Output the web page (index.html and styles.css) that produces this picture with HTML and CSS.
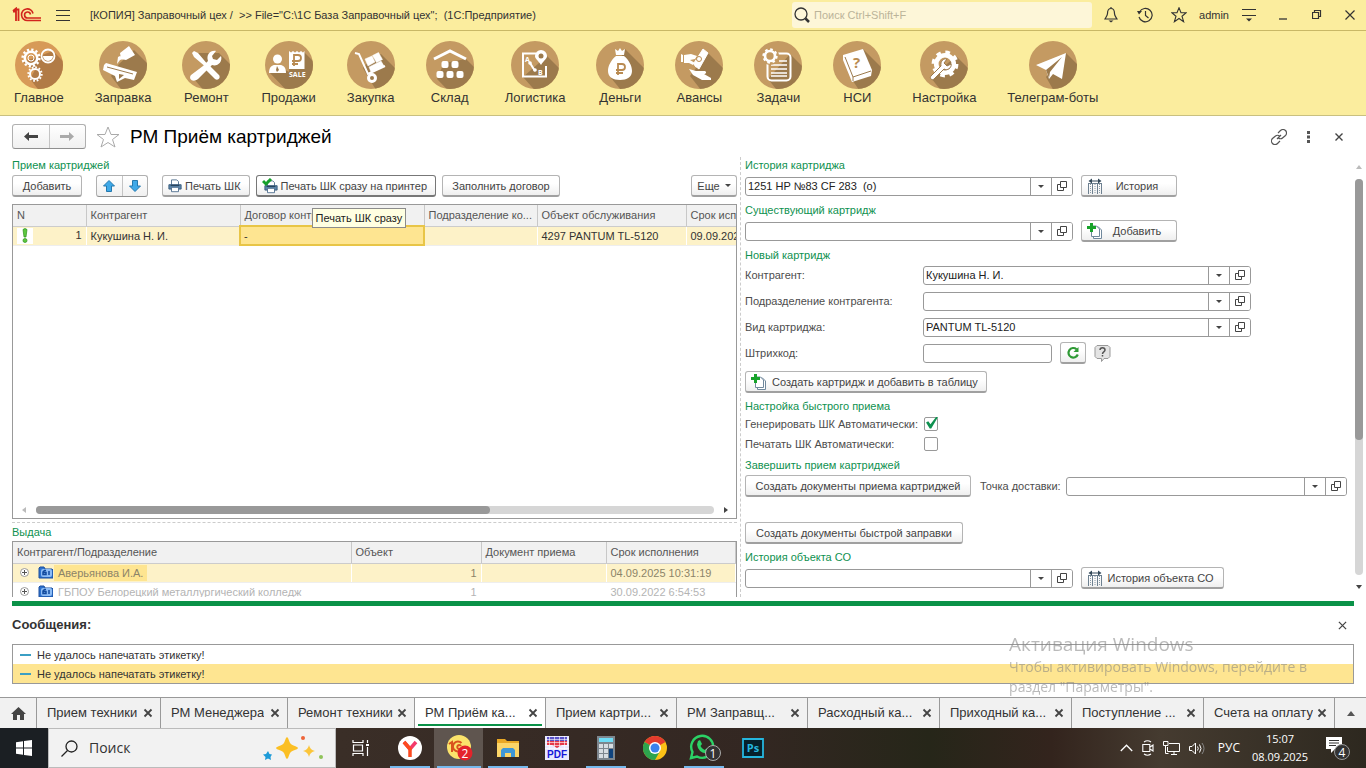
FILE: index.html
```html
<!DOCTYPE html>
<html lang="ru">
<head>
<meta charset="utf-8">
<title>РМ Приём картриджей</title>
<link rel="stylesheet" href="styles.css">
</head>
<body>
<svg class="defs" aria-hidden="true">
  <defs>
    <clipPath id="disc"><circle cx="24" cy="24" r="24"/></clipPath>
    <symbol id="i-open" viewBox="0 0 10 10"><path d="M3.500 .5h6v6h-6zM3 3.500H.5v6h6V7" fill="none" stroke="#444"/></symbol>
    <symbol id="i-x" viewBox="0 0 10 10"><path d="M1.500 1.500l7 7M8.500 1.500l-7 7" fill="none" stroke="#444" stroke-width="1.800"/></symbol>
    <symbol id="i-printer" viewBox="0 0 16 16"><path d="M4 1h6l2 2v4H4z" fill="#fff" stroke="#4a6a8a"/><path d="M1 6.500h14v5H1z" fill="#5d87ad" stroke="#355878"/><path d="M3 7.500h10" stroke="#20384e"/><path d="M4 9.500h8v5H4z" fill="#fff" stroke="#4a6a8a"/></symbol>
    <symbol id="i-addcopy" viewBox="0 0 16 16"><path d="M6.500 4h5l3 3v8.500h-8z" fill="#fff" stroke="#70889c"/><path d="M4.500 3h5l3 3v7.500h-8z" fill="#fff" stroke="#70889c"/><path d="M3 0h3v3h3v3H6v3H3V6H0V3h3z" fill="#18a32b"/></symbol>
    <symbol id="i-history" viewBox="0 0 16 16"><path d="M1.500 5v11M5.500 5v11M10.500 5v11M14.500 5v11M1 5.500h14" stroke="#6d8090"/><path d="M3.500 6v10M12.500 6v10M8 6v10" stroke="#8a9aa6" stroke-dasharray="1 1"/><path d="M1.500 3L5 .5v2h6v-2L14.500 3 11 5.500v-2H5v2z" fill="#33495a"/></symbol>
    <symbol id="i-gear" viewBox="-12 -12 24 24"><circle r="7.500" fill="none" stroke="#fff" stroke-width="4"/><circle r="10" fill="none" stroke="#fff" stroke-width="3" stroke-dasharray="3.927 3.927"/></symbol>
    <symbol id="i-cog" viewBox="-12 -12 24 24"><circle r="7.500" fill="none" stroke="#fff" stroke-width="3"/><circle r="10" fill="none" stroke="#fff" stroke-width="3" stroke-dasharray="2.618 2.618"/></symbol>
    <symbol id="i-plus" viewBox="0 0 9 9"><circle cx="4.500" cy="4.500" r="4" fill="#fff" stroke="#999"/><path d="M2 4.500h5M4.500 2v5" stroke="#555"/></symbol>
    <symbol id="i-folder" viewBox="0 0 15 13"><path d="M1 2l1-1h4l1 2h7l1 1v8H1z" fill="#2d72cf" stroke="#1d4f9e"/><rect x="3" y="3" width="11" height="8" rx="2" fill="#8dbcf5"/><path d="M8 4.500H6.500L5 6v2.500h3V6.500H5.500M11 5v4" stroke="#124a9e" stroke-width="1.500" fill="none"/></symbol>
  </defs>
</svg>

<header class="topbar">
  <svg class="logo" viewBox="0 0 30 16"><path d="M1 4l3-2.500V14M4 2.500h2.500V14M1 4.500h3" fill="none" stroke="#d2251d" stroke-width="1.800"/><path d="M21 6.500A5.800 5.800 0 1 0 15.500 13.500H29M18.500 7.500a3 3 0 1 0-3 3.500H29" fill="none" stroke="#d2251d" stroke-width="1.600"/></svg>
  <button class="plain burger" aria-label="Меню"><svg width="14" height="11" viewBox="0 0 14 11"><path d="M0 .5h14M0 5.500h14M0 10.500h14" stroke="#333"/></svg></button>
  <span class="app-title">[КОПИЯ] Заправочный цех /&nbsp; &gt;&gt; File="C:\1С База Заправочный цех";&nbsp; (1С:Предприятие)</span>
  <label class="search"><svg width="16" height="16" viewBox="0 0 16 16"><circle cx="7" cy="7" r="6" fill="none" stroke="#333" stroke-width="1.300"/><path d="M11.500 11.500l3.500 3.500" stroke="#333" stroke-width="2.500"/></svg><input type="text" placeholder="Поиск Ctrl+Shift+F" aria-label="Поиск"></label>
  <button class="plain cell" aria-label="Уведомления"><svg width="14" height="16" viewBox="0 0 14 16"><path d="M7 1.500c-3 0-3.500 3-3.500 5S2 10 1 12h12c-1-2-2.500-3-2.500-5.500S10 1.500 7 1.500zM7 0v2" fill="none" stroke="#333" stroke-width="1.200"/><path d="M4.500 13.500h5L7 15.500z" fill="#333"/></svg></button>
  <button class="plain cell" aria-label="История"><svg width="16" height="16" viewBox="0 0 16 16"><path d="M2.500 5A6.700 6.700 0 1 1 2 10M8.500 4v4.500l3 2.500" fill="none" stroke="#333" stroke-width="1.200"/><path d="M0 4h5L2 7.500z" fill="#333"/></svg></button>
  <button class="plain cell" aria-label="Избранное"><svg width="16" height="16" viewBox="0 0 16 16"><path d="M8 .8l2 5h5.200l-4.200 3.400 1.600 5.500L8 11.500l-4.600 3.200L5 9.200.8 5.800H6z" fill="none" stroke="#333" stroke-width="1.100"/></svg></button>
  <span class="user">admin</span>
  <button class="plain cell" aria-label="Настройки"><svg width="14" height="14" viewBox="0 0 14 14"><path d="M0 1.500h14M0 7.500h14" stroke="#333" stroke-width="1.200"/><path d="M4 10.500h6L7 13.500z" fill="#333"/></svg></button>
  <button class="plain cell" aria-label="Свернуть"><svg width="10" height="10" viewBox="0 0 10 10"><path d="M1 9h8" stroke="#333" stroke-width="1.300"/></svg></button>
  <button class="plain cell" aria-label="Восстановить"><svg width="10" height="10" viewBox="0 0 10 10"><path d="M.5 2.500h6v6h-6zM2.500 2V.5h6v6H7" fill="none" stroke="#333" stroke-width="1.200"/></svg></button>
  <button class="plain cell last" aria-label="Закрыть"><svg width="10" height="10" viewBox="0 0 10 10"><path d="M.5 .5l9 9M9.500 .5l-9 9" stroke="#333" stroke-width="1.200"/></svg></button>
</header>

<nav class="sections">
  <a href="#"><svg viewBox="0 0 48 48"><g clip-path="url(#disc)"><path fill="#d79a58" d="M0 0h48v48H0z"/><path fill="#b17b46" d="M38 10l30 30v30H40L15 38l5-9-12-8z"/></g><use href="#i-cog" x="6" y="7" width="20" height="20"/><circle cx="16" cy="17" r="3" fill="none" stroke="#fff"/><circle cx="33" cy="15" r="6.500" fill="none" stroke="#fff" stroke-width="1.800"/><path d="M28 15h10a5 5 0 0 1-10 0z" fill="#fff"/><use href="#i-cog" x="12" y="25" width="16" height="16"/></svg>Главное</a>
  <a href="#"><svg viewBox="0 0 48 48"><g clip-path="url(#disc)"><path fill="#c49a62" d="M0 0h48v48H0z"/><path fill="#9c7a4c" d="M35 9l33 33v30H40L12 35l8-12z"/></g><path d="M5 24l2-2 31 9-3 8-9-2-8 4-2-6L4 29z" fill="#fff"/><path d="M8 26l26 7" stroke="#9c7a4c"/><path d="M20 33l5 1-5 4z" fill="#9c7a4c"/><path d="M21 12l9-7 6 9-9 5-5-1zM19 16l2-1 3 3-3 1-3 4z" fill="#fff"/></svg>Заправка</a>
  <a href="#"><svg viewBox="0 0 48 48"><g clip-path="url(#disc)"><path fill="#c49a62" d="M0 0h48v48H0z"/><path fill="#9c7a4c" d="M37 12l31 31v30H42L12 38l10-14L11 12z"/></g><path d="M10 12l2-2 4 2 11 13-2 2-13-11zM28 25l9 9c2 3-1 6-4 4l-9-9z" fill="#fff"/><path d="M9 34l12-9 5-5c-2-6 2-11 8-10l-4 5 1 3 4 1 4-4c2 6-4 11-9 9L16 38c-5 4-10 0-7-4z" fill="#fff"/></svg>Ремонт</a>
  <a href="#"><svg viewBox="0 0 48 48"><g clip-path="url(#disc)"><path fill="#c49a62" d="M0 0h48v48H0z"/><path fill="#9c7a4c" d="M39 11l30 30v30H42L5 32l10-6 9 5 2-20z"/></g><circle cx="12.500" cy="18" r="4.500" fill="#fff"/><path d="M4 32c0-6 3-8 6-8h5c3 0 6 2 6 8z" fill="#fff"/><path d="M12 25l2 4-2 2-1-2z" fill="#9c7a4c"/><path d="M24 10l2 1.500L28 10l2 1.500 2-1.500 2 1.500 2-1.500 2 1.500 1.500-1.500v18H24z" fill="#fff"/><path d="M29 25V14h4a3 3 0 0 1 0 6h-6M27 23h6" fill="none" stroke="#b98b52" stroke-width="1.800"/><text x="24" y="36" fill="#fff" font-size="7" font-weight="700" font-family="Open Sans, sans-serif">SALE</text></svg>Продажи</a>
  <a href="#"><svg viewBox="0 0 48 48"><g clip-path="url(#disc)"><path fill="#c49a62" d="M0 0h48v48H0z"/><path fill="#9c7a4c" d="M34 13l35 35v25H45L24 41l-8-14 6-7z"/></g><path d="M8 12l4 1 9 20 17-8" fill="none" stroke="#fff" stroke-width="2"/><circle cx="25" cy="37" r="3.500" fill="none" stroke="#fff" stroke-width="3"/><path d="M18 18l7-3 3 6-7 4zM25.500 14.500l6-3 4 7-6 3zM22 26l12-6 3 5-13 6z" fill="#fff" stroke="#fff" stroke-width=".5"/></svg>Закупка</a>
  <a href="#"><svg viewBox="0 0 48 48"><g clip-path="url(#disc)"><path fill="#c49a62" d="M0 0h48v48H0z"/><path fill="#9c7a4c" d="M40 18l29 29v25H44L11 38l7-16z"/></g><path d="M8 18l16-8 16 8" fill="none" stroke="#fff" stroke-width="3"/><g fill="#fff"><rect x="15.500" y="20" width="7" height="7" rx="2"/><rect x="25.500" y="20" width="7" height="7" rx="2"/><rect x="10.500" y="30" width="7" height="7" rx="2"/><rect x="20.500" y="30" width="7" height="7" rx="2"/><rect x="30.500" y="30" width="7" height="7" rx="2"/></g></svg>Склад</a>
  <a href="#"><svg viewBox="0 0 48 48"><g clip-path="url(#disc)"><path fill="#c49a62" d="M0 0h48v48H0z"/><path fill="#9c7a4c" d="M36 15l33 33v25H45L12 36z"/></g><path d="M25 12.500H12v23h23V25" fill="none" stroke="#fff" stroke-width="2"/><path d="M30 24c-3-5-6-6-6-9a6 6 0 0 1 12 0c0 3-3 4-6 9z" fill="#fff"/><circle cx="30" cy="15" r="2.500" fill="#9c7a4c"/><path d="M19 22l5 8" stroke="#fff" stroke-width="2"/><circle cx="19" cy="22" r="1.800" fill="#fff"/><circle cx="24" cy="29" r="1.800" fill="#fff"/><text x="14" y="21" fill="#fff" font-size="7" font-weight="700" font-family="Open Sans, sans-serif">A</text><text x="27" y="34" fill="#fff" font-size="7" font-weight="700" font-family="Open Sans, sans-serif">B</text></svg>Логистика</a>
  <a href="#"><svg viewBox="0 0 48 48"><g clip-path="url(#disc)"><path fill="#c49a62" d="M0 0h48v48H0z"/><path fill="#9c7a4c" d="M29 8l40 40v25H45L15 37z"/></g><path d="M19 8l3 2 2-3 2 3 3-2-1 6h-8zM20 15h8c5 4 8 10 8 15 0 6-5 9-12 9s-12-3-12-9c0-5 3-11 8-15z" fill="#fff"/><path d="M22 34V23h4a3 3 0 0 1 0 6h-6M20 32h7" fill="none" stroke="#b98b52" stroke-width="1.800"/></svg>Деньги</a>
  <a href="#"><svg viewBox="0 0 48 48"><g clip-path="url(#disc)"><path fill="#c49a62" d="M0 0h48v48H0z"/><path fill="#9c7a4c" d="M33 12l36 36v25H45L15 35l9-12z"/></g><path d="M6 13l2 1v7H6zM9 14l7-1 6 2-2 3-5 1 5 3-2 2-4-2-5 0z" fill="#fff"/><path d="M19 22l9-14 5 4-9 16-4-3z" fill="#fff" stroke="#fff"/><circle cx="24" cy="18" r="2.500" fill="none" stroke="#b98b52"/><path d="M14 28l7 2 9 0c2 1 1 3-1 3l7 4v2h-9l-9-5z" fill="#fff"/></svg>Авансы</a>
  <a href="#"><svg viewBox="0 0 48 48"><g clip-path="url(#disc)"><path fill="#c49a62" d="M0 0h48v48H0z"/><path fill="#9c7a4c" d="M36 13l33 33v27H42L14 38z"/></g><rect x="13.500" y="12.500" width="23" height="27" rx="4" fill="none" stroke="#fff" stroke-width="2"/><path d="M25 20h8M17 24h16M17 28h16M17 32h16M17 35h16" stroke="#fff" stroke-width="1.600"/><circle cx="16" cy="15" r="9" fill="#c49a62"/><use href="#i-gear" x="8" y="7" width="16" height="16"/></svg>Задачи</a>
  <a href="#"><svg viewBox="0 0 48 48"><g clip-path="url(#disc)"><path fill="#c49a62" d="M0 0h48v48H0z"/><path fill="#9c7a4c" d="M30 8l39 39v26H42L20 40z"/></g><path d="M10 14l20-6 9 21-1 6-19 6-9-22z" fill="#fff"/><path d="M12 16l8 20 18-6M20 36v4" fill="none" stroke="#9c7a4c"/><text x="20" y="27" fill="#b98b52" font-size="15" font-weight="700" font-family="Open Sans, sans-serif">?</text></svg>НСИ</a>
  <a href="#"><svg viewBox="0 0 48 48"><g clip-path="url(#disc)"><path fill="#c49a62" d="M0 0h48v48H0z"/><path fill="#9c7a4c" d="M36 15l33 33v25H40L11 37z"/></g><use href="#i-gear" x="11" y="9" width="28" height="28"/><path d="M11 35l10-10c-1-5 3-8 6-7l-3 4 3 3 4-2c1 4-4 7-7 5L14 38c-2 2-5-1-3-3z" fill="#fff" stroke="#9c7a4c"/></svg>Настройка</a>
  <a href="#"><svg viewBox="0 0 48 48"><g clip-path="url(#disc)"><path fill="#c49a62" d="M0 0h48v48H0z"/><path fill="#9c7a4c" d="M37 12l32 32v29H38L17 36z"/></g><path d="M7 24l30-12-4 26-9-5-4 5-3-9z" fill="#fff"/><path d="M17 29l16-13-12 15-1 6z" fill="#9c7a4c"/></svg>Телеграм-боты</a>
</nav>

<div class="form-head">
  <div class="split nav">
    <button aria-label="Назад"><svg width="14" height="9" viewBox="0 0 14 9"><path d="M0 4.500L5 0v3h9v3H5v3z" fill="#444"/></svg></button>
    <button aria-label="Вперед"><svg width="14" height="9" viewBox="0 0 14 9"><path d="M14 4.500L9 0v3H0v3h9v3z" fill="#aaa"/></svg></button>
  </div>
  <button class="plain" aria-label="В избранное"><svg width="24" height="22" viewBox="0 0 24 22"><path d="M12 1l3 7.500h8l-6.500 5L19 21l-7-4.500L5 21l2.500-7.500L1 8.500h8z" fill="#fff" stroke="#aaa"/></svg></button>
  <h1>РМ Приём картриджей</h1>
  <button class="plain link" aria-label="Ссылка"><svg width="16" height="16" viewBox="0 0 16 16"><path d="M7 4l2.500-2.500a3 3 0 0 1 5 5L11.500 9c-1 1-3 1-4 0M9 12l-2.500 2.500a3 3 0 0 1-5-5L4.500 7c1-1 3-1 4 0M6 10l4-4" fill="none" stroke="#555" stroke-width="1.200"/></svg></button>
  <button class="plain" aria-label="Еще"><svg width="3" height="12" viewBox="0 0 3 12"><path d="M0 0h3v3H0zM0 4.500h3v3H0zM0 9h3v3H0z" fill="#555"/></svg></button>
  <button class="plain" aria-label="Закрыть"><svg width="10" height="10" viewBox="0 0 10 10"><path d="M1.500 1.500l7 7M8.500 1.500l-7 7" stroke="#444" stroke-width="1.400"/></svg></button>
</div>

<main class="work">
  <section class="left">
    <h2>Прием картриджей</h2>
    <div class="row toolbar">
      <button class="btn w70">Добавить</button>
      <div class="split arrows">
        <button aria-label="Вверх"><svg width="12" height="12" viewBox="0 0 12 12"><path d="M6 .5l5.500 5.500H8.500v5.500h-5V6H.5z" fill="#3fa9e8" stroke="#2479ae"/></svg></button>
        <button aria-label="Вниз"><svg width="12" height="12" viewBox="0 0 12 12"><path d="M6 11.500l5.500-5.500H8.500V.5h-5V6H.5z" fill="#3fa9e8" stroke="#2479ae"/></svg></button>
      </div>
      <button class="btn icon"><svg width="14" height="14"><use href="#i-printer"/></svg>Печать ШК</button>
      <div class="tip-host">
        <button class="btn icon hot"><svg width="16" height="16" viewBox="0 0 16 16"><use href="#i-printer" x="2" y="2" width="14" height="14"/><path d="M1 3l3 3 5-5" fill="none" stroke="#14a02a" stroke-width="3"/></svg>Печать ШК сразу на принтер</button>
        <span class="tip" role="tooltip">Печать ШК сразу</span>
      </div>
      <button class="btn w118">Заполнить договор</button>
      <button class="btn more">Еще<i class="tri"></i></button>
    </div>
    <div class="grid main-grid">
      <table class="t1">
        <colgroup><col class="c73"><col class="c154"><col class="c184"><col class="c113"><col class="c149"><col></colgroup>
        <thead><tr><th>N</th><th>Контрагент</th><th>Договор контрагента</th><th>Подразделение ко...</th><th>Объект обслуживания</th><th>Срок исполнения</th></tr></thead>
        <tbody><tr class="sel"><td class="num"><span class="mark"><svg width="6" height="15" viewBox="0 0 6 15"><path d="M1 1.500Q3-.5 5 1.500L4 9H2z" fill="#5cc83e" stroke="#2f8f1c" stroke-width=".7"/><circle cx="3" cy="12.500" r="2" fill="#5cc83e" stroke="#2f8f1c" stroke-width=".7"/></svg></span>1</td><td>Кукушина Н. И.</td><td class="cur">-</td><td></td><td>4297 PANTUM TL-5120</td><td>09.09.2025</td></tr></tbody>
      </table>
      <div class="hscroll"><i class="al"></i><div class="track"><div class="thumb"></div></div><i class="ar"></i></div>
    </div>
    <div class="lower">
      <h2>Выдача</h2>
      <div class="grid">
        <table class="t2">
          <colgroup><col class="c338"><col class="c130"><col class="c125"><col></colgroup>
          <thead><tr><th>Контрагент/Подразделение</th><th>Объект</th><th>Документ приема</th><th>Срок исполнения</th></tr></thead>
          <tbody>
            <tr class="sel dim"><td><span class="tree"><svg width="9" height="9"><use href="#i-plus"/></svg><svg width="15" height="13"><use href="#i-folder"/></svg><span class="pick">Аверьянова И.А.</span></span></td><td class="num">1</td><td></td><td>04.09.2025 10:31:19</td></tr>
            <tr class="dim pale"><td><span class="tree"><svg width="9" height="9"><use href="#i-plus"/></svg><svg width="15" height="13"><use href="#i-folder"/></svg><span class="name">ГБПОУ Белорецкий металлургический колледж</span></span></td><td class="num">1</td><td></td><td>30.09.2022 6:54:53</td></tr>
          </tbody>
        </table>
      </div>
    </div>
  </section>

  <section class="right">
    <div class="group">
      <h2><label for="hist">История картриджа</label></h2>
      <div class="row"><div class="combo w328"><input id="hist" type="text" value="1251 HP №83 CF 283  (о)"><button aria-label="Выбрать"><i class="tri"></i></button><button aria-label="Открыть"><svg width="10" height="10"><use href="#i-open"/></svg></button></div><button class="btn icon w96"><svg width="16" height="16"><use href="#i-history"/></svg><span>История</span></button></div>
    </div>
    <div class="group">
      <h2><label for="exist">Существующий картридж</label></h2>
      <div class="row"><div class="combo w328"><input id="exist" type="text"><button aria-label="Выбрать"><i class="tri"></i></button><button aria-label="Открыть"><svg width="10" height="10"><use href="#i-open"/></svg></button></div><button class="btn icon w96"><svg width="16" height="16"><use href="#i-addcopy"/></svg><span>Добавить</span></button></div>
    </div>
    <div class="group">
      <h2 class="tight">Новый картридж</h2>
      <div class="fields">
        <div class="row"><label class="lab" for="contr">Контрагент:</label><div class="combo w328"><input id="contr" type="text" value="Кукушина Н. И."><button aria-label="Выбрать"><i class="tri"></i></button><button aria-label="Открыть"><svg width="10" height="10"><use href="#i-open"/></svg></button></div></div>
        <div class="row"><label class="lab" for="dep">Подразделение контрагента:</label><div class="combo w328"><input id="dep" type="text"><button aria-label="Выбрать"><i class="tri"></i></button><button aria-label="Открыть"><svg width="10" height="10"><use href="#i-open"/></svg></button></div></div>
        <div class="row"><label class="lab" for="kind">Вид картриджа:</label><div class="combo w328"><input id="kind" type="text" value="PANTUM TL-5120"><button aria-label="Выбрать"><i class="tri"></i></button><button aria-label="Открыть"><svg width="10" height="10"><use href="#i-open"/></svg></button></div></div>
        <div class="row"><label class="lab" for="bar">Штрихкод:</label><div class="combo w129"><input id="bar" type="text"></div><button class="btn refresh" aria-label="Сгенерировать"><svg width="14" height="14" viewBox="0 0 14 14"><path d="M10.500 3.200A4.800 4.800 0 1 0 11.800 8.500" fill="none" stroke="#2f9a35" stroke-width="2.200"/><path d="M12.500 1v5h-5z" fill="#2f9a35"/></svg></button><button class="plain" aria-label="Справка"><svg width="17" height="17" viewBox="0 0 17 17"><path d="M3 .5h11l2 2v9l-2 2h-4L7.500 16.500V13.500H3l-2-2v-9z" fill="#e4e4e4" stroke="#999"/><path d="M6 5c0-3 5-3 5 0 0 2-2.500 1.800-2.500 4M8.500 10v1.500" fill="none" stroke="#555" stroke-width="1.500"/></svg></button></div>
      </div>
      <div class="row create"><button class="btn icon create-btn"><svg width="16" height="16"><use href="#i-addcopy"/></svg>Создать картридж и добавить в таблицу</button></div>
    </div>
    <div class="group">
      <h2>Настройка быстрого приема</h2>
      <div class="fields checks">
        <div class="row"><label class="lab" for="gen">Генерировать ШК Автоматически:</label><input class="tick" id="gen" type="checkbox" checked></div>
        <div class="row"><label class="lab" for="prn">Печатать ШК Автоматически:</label><input class="tick" id="prn" type="checkbox"></div>
      </div>
    </div>
    <div class="group">
      <h2>Завершить прием картриджей</h2>
      <div class="row"><button class="btn w226">Создать документы приема картриджей</button><label class="point" for="point">Точка доставки:</label><div class="combo grow"><input id="point" type="text"><button aria-label="Выбрать"><i class="tri"></i></button><button aria-label="Открыть"><svg width="10" height="10"><use href="#i-open"/></svg></button></div></div>
      <div class="row fast"><button class="btn w218">Создать документы быстрой заправки</button></div>
    </div>
    <div class="group">
      <h2><label for="obj">История объекта СО</label></h2>
      <div class="row"><div class="combo w328"><input id="obj" type="text"><button aria-label="Выбрать"><i class="tri"></i></button><button aria-label="Открыть"><svg width="10" height="10"><use href="#i-open"/></svg></button></div><button class="btn icon w143"><svg width="16" height="16"><use href="#i-history"/></svg><span>История объекта СО</span></button></div>
    </div>
  </section>
  <div class="vscroll"><i class="au"></i><div class="track"><div class="thumb"></div></div><i class="ad"></i></div>
</main>

<section class="messages">
  <div class="msg-head"><h3>Сообщения:</h3><button class="plain" aria-label="Закрыть сообщения"><svg width="9" height="9" viewBox="0 0 10 10"><path d="M1 1l8 8M9 1l-8 8" stroke="#444" stroke-width="1.400"/></svg></button></div>
  <ul><li>Не удалось напечатать этикетку!</li><li class="on">Не удалось напечатать этикетку!</li></ul>
</section>

<nav class="tabs">
  <button class="home" aria-label="Начальная страница"><svg width="15" height="13" viewBox="0 0 15 13"><path d="M7.500 0L15 7h-2v6H9V8H6v5H2V7H0z" fill="#444"/></svg></button>
  <a href="#" class="t124"><span>Прием техники</span><svg><use href="#i-x"/></svg></a>
  <a href="#" class="t127"><span>РМ Менеджера</span><svg><use href="#i-x"/></svg></a>
  <a href="#" class="t127"><span>Ремонт техники</span><svg><use href="#i-x"/></svg></a>
  <a href="#" class="active"><span>РМ Приём ка...</span><svg><use href="#i-x"/></svg></a>
  <a href="#"><span>Прием картри...</span><svg><use href="#i-x"/></svg></a>
  <a href="#"><span>РМ Заправщ...</span><svg><use href="#i-x"/></svg></a>
  <a href="#" class="t132"><span>Расходный ка...</span><svg><use href="#i-x"/></svg></a>
  <a href="#" class="t132"><span>Приходный ка...</span><svg><use href="#i-x"/></svg></a>
  <a href="#" class="t132"><span>Поступление ...</span><svg><use href="#i-x"/></svg></a>
  <a href="#"><span>Счета на оплату</span><svg><use href="#i-x"/></svg></a>
  <button class="up" aria-label="Все окна"><i class="au dark"></i></button>
</nav>

<footer class="taskbar">
  <button class="start" aria-label="Пуск"><svg width="16" height="16" viewBox="0 0 16 16"><path d="M0 2.300l7-1v6.200H0zM8 1.100L16 0v7.500H8zM0 8.500h7v6.200l-7-1zM8 8.500h8V16l-8-1.100z" fill="#fff"/></svg></button>
  <label class="find"><svg width="17" height="17" viewBox="0 0 17 17"><circle cx="10.500" cy="6.500" r="5.500" fill="none" stroke="#222" stroke-width="1.300"/><path d="M6.500 10.500L.5 16.500" stroke="#222" stroke-width="1.300"/></svg><input type="text" placeholder="Поиск" aria-label="Поиск в Windows"><svg width="62" height="26" viewBox="0 0 62 26"><path d="M24 2q1 0 2 3.500 1 4 4.500 5Q35 12 35 13t-4.500 2.500q-3.500 1-4.500 5Q25 24 24 24t-2-3.500q-1-4-4.500-5Q13 14 13 13t4.500-2.500q3.500-1 4.500-5Q23 2 24 2z" fill="#fbbf24"/><path d="M46 10q1 5 6 6-5 1-6 6-1-5-6-6 5-1 6-6z" fill="#fbc53a"/><path d="M5 16l1.500 3L9 19.500 7.500 22l.5 3-3-1.500L2 25l.5-3L0 19.500l3-.5z" fill="#1e9bd8"/><circle cx="40" cy="3" r="2" fill="#ee6438"/><circle cx="58" cy="22" r="2" fill="#8fc35a"/></svg></label>
  <div class="apps">
    <button aria-label="Представление задач"><svg width="18" height="16" viewBox="0 0 18 16"><path d="M1 0v2.500h10V0M1 16v-2.500h10V16M1.500 5h9v6h-9zM15.500 0v3M15.500 7v9" fill="none" stroke="#fff" stroke-width="1.200"/><path d="M14 4h3v2h-3z" fill="#fff"/></svg></button>
    <button class="run" aria-label="Яндекс"><svg width="24" height="24" viewBox="0 0 24 24"><circle cx="12" cy="12" r="12" fill="#fff"/><path d="M6 6l6 7 6-7" fill="none" stroke="#f33a6a" stroke-width="3.500"/><path d="M6 6l6 7v8" fill="none" stroke="#fc4a20" stroke-width="3.500"/></svg></button>
    <button class="run cur-app" aria-label="1С"><svg width="28" height="26" viewBox="0 0 28 26"><circle cx="14" cy="12" r="12" fill="#fbe36b"/><path d="M4 9l3-2v10M16.500 8a5 5 0 1 0 0 7M16 11a2 2 0 1 0-2 3h8" fill="none" stroke="#d9531e" stroke-width="2"/><circle cx="20" cy="18" r="7.500" fill="#e4232b"/><text x="20" y="22.500" text-anchor="middle" fill="#fff" font-size="12" font-family="Open Sans, sans-serif">2</text></svg></button>
    <button class="run" aria-label="Проводник"><svg width="24" height="20" viewBox="0 0 24 20"><path d="M1 1h8l2 2h12v16H1z" fill="#e9a825"/><path d="M1 5h22v14H1z" fill="#fcd568"/><path d="M5 19v-7l2-2h10l2 2v7h-4v-4H9v4z" fill="#3f97d6"/></svg></button>
    <button aria-label="PDF"><svg width="24" height="24" viewBox="0 0 24 24"><path d="M0 0h24v24H0z" fill="#e9e9ff"/><path d="M2 1h20v4H2z" fill="#5a52c8"/><path d="M2 5h20v4h-5l-5 3-5-3H2z" fill="#e53948"/><text x="12" y="22" text-anchor="middle" fill="#1515d8" font-size="10" font-weight="700" font-family="Liberation Sans, sans-serif">PDF</text><path d="M0 3.500h24M0 6.500h24M0 9.500h24M0 12.500h24M4.500 0v14M9.500 0v14M14.500 0v14M19.500 0v14" stroke="#fff" stroke-width=".6"/></svg></button>
    <button class="run" aria-label="Калькулятор"><svg width="18" height="24" viewBox="0 0 18 24"><path d="M0 0h18v24H0z" fill="#7d868e"/><path d="M2 2h14v4H2z" fill="#6fdcf5"/><g fill="#d7dde2"><path d="M2 8h4v4H2zM7 8h4v4H7zM12 8h4v4h-4zM2 13h4v4H2zM7 13h4v4H7zM2 18h4v4H2zM7 18h4v4H7z"/></g><path d="M12 13h4v9h-4z" fill="#10447e"/></svg></button>
    <button aria-label="Chrome"><svg width="24" height="24" viewBox="0 0 24 24"><circle cx="12" cy="12" r="12" fill="#fbc116"/><path d="M12 12L1.600 6A12 12 0 0 1 22.400 6z" fill="#e33b2e"/><path d="M12 12L1.600 6A12 12 0 0 0 12 24l5-9z" fill="#2da44e"/><circle cx="12" cy="12" r="6" fill="#fff"/><circle cx="12" cy="12" r="4.500" fill="#3b82ee"/></svg></button>
    <button class="run" aria-label="WhatsApp"><svg width="34" height="28" viewBox="-3 -1 34 28"><path d="M1 23l1.500-6A11 11 0 1 1 7 21.500z" fill="none" stroke="#2bd366" stroke-width="2.400"/><path d="M8 6l2-1 2 4-1.500 2q1 2.500 4 4l2-1.500 3.500 2q-1 3-4 3-8-1.500-9-9z" fill="#2bd366"/><circle cx="23" cy="18" r="7.500" fill="#333" stroke="#aaa"/><text x="23" y="22.500" text-anchor="middle" fill="#fff" font-size="12" font-family="Open Sans, sans-serif">1</text></svg></button>
    <button aria-label="Photoshop"><svg width="22" height="20" viewBox="0 0 22 20"><path d="M1 1h20v18H1z" fill="#06202b" stroke="#25b6de" stroke-width="1.800"/><text x="11" y="14" text-anchor="middle" fill="#25b6de" font-size="11" font-weight="700" font-family="Open Sans, sans-serif">Ps</text></svg></button>
  </div>
  <div class="tray">
    <svg width="13" height="8" viewBox="0 0 13 8"><path d="M.8 7l5.700-5.800L12.200 7" fill="none" stroke="#fff" stroke-width="1.300"/></svg>
    <svg width="12" height="16" viewBox="0 0 12 16"><path d="M.8 4.500h7v7h-7zM8 7l3-2v6L8 9M2 2Q5.500-.5 9 2M2 14q3.500 2.500 7 0" fill="none" stroke="#fff" stroke-width="1.100"/></svg>
    <svg width="17" height="14" viewBox="0 0 17 14"><path d="M6 2.500h10.500v8H4.500V6M8 13.500h6M11 10.500v3M.5 .5h4.500v4H.5zM2.500 4.500v8h3" fill="none" stroke="#fff"/></svg>
    <svg width="16" height="13" viewBox="0 0 16 13"><path d="M.5 4.500h2.500l3.500-3.500v11L3 8.500H.5zM8.500 4.500q1.500 2 0 4M10.500 2.500q3 4 0 8" fill="none" stroke="#fff"/><path d="M13 1q4 5.500 0 11" fill="none" stroke="#888"/></svg>
    <span class="lang">РУС</span>
    <span class="clock">15:07<br>08.09.2025</span>
    <svg class="note" width="26" height="24" viewBox="0 0 26 24"><path d="M0 1h16v12H9l-4 4v-4H0z" fill="#fff"/><path d="M3 4.500h10M3 7h10M3 9.500h7" stroke="#333"/><circle cx="16" cy="16" r="7.500" fill="#333" stroke="#999"/><text x="16" y="20.500" text-anchor="middle" fill="#fff" font-size="12" font-family="Open Sans, sans-serif">4</text></svg>
  </div>
</footer>

<div class="watermark"><b>Активация Windows</b>Чтобы активировать Windows, перейдите в<br>раздел "Параметры".</div>
</body>
</html>
```
FILE: styles.css
```css
* { box-sizing: border-box; }
html, body { height: 100%; margin: 0; }
body {
  display: flex;
  flex-direction: column;
  overflow: hidden;
  background: #fff;
  color: #333;
  font: 11px/16px "Liberation Sans", sans-serif;
}
button, input { font: inherit; color: inherit; margin: 0; }
svg { flex: none; display: block; }
.defs { position: absolute; width: 0; height: 0; }
h1, h2, h3, ul { margin: 0; padding: 0; font-weight: normal; }
.plain { border: 0; padding: 0; background: none; display: flex; align-items: center; justify-content: center; }

/* Window header */
.topbar { flex: none; height: 31px; display: flex; align-items: center; background: #fbed9e; border-bottom: 1px solid #c9b866; }
.logo { width: 30px; height: 16px; margin-left: 12px; }
.burger { margin: 0 20px 0 14px; }
.app-title { white-space: pre; }
.search { display: flex; align-items: center; gap: 4px; width: 300px; height: 26px; margin: 0 2px 0 auto; padding-left: 2px; background: #fdf6d8; border-radius: 3px; }
.search input { flex: 1; min-width: 0; border: 0; padding: 0; background: none; }
.search input::placeholder { color: #bbb49a; }
.cell { width: 34px; height: 30px; }
.cell.last { width: 32px; }
.user { width: 36px; text-align: center; }

/* Sections panel */
.sections { flex: none; display: flex; gap: 31px; height: 85px; padding: 10px 14px 0; background: #fbed9e; border-bottom: 1px solid #c9c080; }
.sections a { display: flex; flex-direction: column; align-items: center; min-width: 48px; color: #333; font-size: 13px; text-decoration: none; white-space: nowrap; }
.sections svg { width: 48px; height: 48px; margin-bottom: 1px; }

/* Form header */
.form-head { flex: none; display: flex; align-items: center; height: 41px; padding: 0 22px 0 12px; }
.form-head h1 { flex: 1; margin-left: 10px; color: #000; font-size: 19px; line-height: 24px; }
.split { display: flex; height: 22px; border: 1px solid #b0b0b0; border-bottom-color: #8f8f8f; border-radius: 3px; background: linear-gradient(#fff, #f0f0f0); }
.split button { flex: 1; display: flex; align-items: center; justify-content: center; border: 0; padding: 0; background: none; }
.split button + button { border-left: 1px solid #c4c4c4; }
.nav { width: 74px; height: 25px; margin-right: 10px; }
.form-head .link { margin-right: 20px; }
.form-head .plain:last-child { margin-left: 24px; }

/* Work area */
.work { flex: 1; min-height: 0; display: flex; margin-bottom: 4px; overflow: hidden; }
h2 { color: #0f9150; font-size: 11px; line-height: 16px; margin-bottom: 1px; }
.tight { margin-bottom: 0; }
.row { display: flex; align-items: center; height: 24px; }
.left { flex: 1; min-width: 0; display: flex; flex-direction: column; padding: 0 3px 0 12px; }
.btn { display: flex; align-items: center; justify-content: center; height: 22px; padding: 0 8px; border: 1px solid #b4b4b4; border-bottom: 2px solid #a0a0a0; border-radius: 3px; background: linear-gradient(#fff 40%, #efefef); color: #444; white-space: nowrap; }
.btn.icon { padding: 0 8px 0 5px; gap: 3px; justify-content: flex-start; }
.btn.icon span { flex: 1; text-align: center; }
.hot { border-color: #777; }
.w70 { width: 70px; margin-right: 14px; }
.w118 { width: 118px; }
.arrows { width: 52px; margin-right: 14px; }
.toolbar .icon { margin-right: 6px; }
.tri { display: inline-block; border: 3px solid transparent; border-top-color: #444; border-bottom: 0; }
.more { margin-left: auto; gap: 5px; width: 46px; padding: 0; }
.tip-host { position: relative; z-index: 2; }
.tip { position: absolute; left: 56px; top: 33px; padding: 1px 3px; border: 1px solid #8c8c8c; background: #ffffe1; color: #222; white-space: nowrap; }

.grid { overflow: hidden; border: 1px solid #999; }
.main-grid { flex: 1; min-height: 0; display: flex; flex-direction: column; margin-top: 6px; }
table { table-layout: fixed; border-collapse: collapse; width: 100%; }
.t1 { width: 760px; }
.c73 { width: 73px; }
.c154 { width: 154px; }
.c184 { width: 184px; }
.c113 { width: 113px; }
.c149 { width: 149px; }
.c338 { width: 338px; }
.c130 { width: 130px; }
.c125 { width: 125px; }
th, td { padding: 0 4px; overflow: hidden; text-align: left; font-weight: normal; white-space: nowrap; }
th { height: 21px; background: #f1f1f1; border-bottom: 1px solid #ccc; border-right: 1px solid #c8c8c8; color: #555; }
td { height: 19px; line-height: 14px; border-bottom: 1px solid #eee; border-right: 1px solid #fff; }
.sel td { background: #fdf2c8; }
.sel .cur { background: #fee591; border: 2px solid #e8c547; padding: 0 3px; }
.num.num { text-align: right; }
.mark { float: left; width: 16px; height: 16px; padding-left: 5px; background: #fff; }
.dim td { color: #8c8469; }
.pale td { color: #b4b4b4; }
.tree { display: flex; align-items: center; gap: 9px; padding-left: 3px; }
.pick, .name { padding: 1px 4px; margin-left: -8px; }
.pick { background: #fee591; }
.hscroll { display: flex; align-items: center; gap: 10px; margin-top: auto; height: 16px; padding: 0 8px 0 9px; }
.hscroll .track { flex: 1; height: 8px; border-radius: 4px; background: #d6d6d6; }
.hscroll .thumb { width: 67%; height: 8px; border-radius: 4px; background: #999; }
.al, .ar { border: 3px solid transparent; }
.al { border-right: 4px solid #bbb; border-left: 0; }
.ar { border-left: 4px solid #444; border-right: 0; }
.lower { flex: none; height: 75px; margin-top: 3px; padding-top: 1px; border-top: 1px dashed #ccc; overflow: hidden; }

.right { flex: 0 1 611px; display: flex; flex-direction: column; gap: 4px; padding: 0 4px; border-left: 1px dashed #ccc; white-space: nowrap; overflow: hidden; }
.combo { display: flex; height: 19px; border: 1px solid #999; border-radius: 3px; background: #fff; overflow: hidden; }
.combo input { flex: 1; min-width: 0; border: 0; padding: 0 2px; background: none; color: #222; }
.combo button { width: 21px; display: flex; align-items: center; justify-content: center; border: 0; border-left: 1px solid #999; padding: 0; background: #fff; }
.w328 { width: 328px; }
.w129 { width: 129px; }
.grow { flex: 1; }
.right .row > .combo + .btn { margin-left: 8px; }
.w96 { width: 96px; }
.w143 { width: 143px; }
.fields { display: flex; flex-direction: column; gap: 2px; }
.lab { width: 178px; color: #4d4d4d; }
.refresh { width: 26px; padding: 0; margin-right: 8px; }
.create { margin-top: 5px; }
.create-btn.icon { gap: 5px; }
.checks .row { height: 18px; }
.tick { appearance: none; width: 14px; height: 14px; margin-left: 1px; border: 1px solid #999; border-radius: 2px; background: #fff; }
.tick:checked::after { content: ""; display: block; width: 13px; height: 12px; margin-top: -1px; background: #0f9150; clip-path: polygon(8% 45%, 25% 35%, 42% 60%, 85% 0, 100% 0, 48% 95%, 36% 95%); }
.w226 { width: 226px; }
.w218 { width: 218px; }
.point { margin: 0 5px 0 9px; color: #4d4d4d; }
.fast { margin-top: 23px; }
.vscroll { width: 15px; display: flex; flex-direction: column; align-items: center; gap: 10px; padding: 8px 0; }
.vscroll .track { flex: 1; width: 8px; border-radius: 4px; background: #d6d6d6; }
.vscroll .thumb { width: 8px; height: 66%; border-radius: 4px; background: #999; }
.au, .ad { border: 3px solid transparent; }
.au { border-bottom: 4px solid #bbb; border-top: 0; }
.ad { border-top: 4px solid #444; border-bottom: 0; }
.au.dark { border-width: 0 4px 5px; border-bottom-color: #555; }

/* Messages */
.messages { flex: none; height: 96px; margin: 0 12px; border-top: 5px solid #0a9248; }
.msg-head { display: flex; align-items: center; justify-content: space-between; height: 38px; padding-right: 7px; }
.msg-head h3 { font-size: 13px; font-weight: bold; }
.messages ul { list-style: none; border: 1px solid #999; }
.messages li { display: flex; align-items: center; gap: 6px; height: 19px; padding-left: 7px; }
.messages li::before { content: ""; width: 11px; height: 2px; background: #3b9fc4; }
.messages li + li { background: #fee591; }

/* Open windows */
.tabs { flex: none; display: flex; height: 31px; border-top: 1px solid #999; background: #f1f1f1; font-size: 13px; }
.tabs a, .tabs button { display: flex; align-items: center; border: 0; border-right: 1px solid #999; background: none; }
.tabs a { flex: 0 1 131px; min-width: 0; justify-content: space-between; padding: 0 7px 0 10px; color: #333; text-decoration: none; white-space: nowrap; }
.tabs a span { overflow: hidden; }
.tabs svg { width: 10px; height: 10px; }
.tabs .t124 { flex-basis: 124px; }
.tabs .t127 { flex-basis: 127px; }
.tabs .t132 { flex-basis: 132px; }
.tabs .home { width: 37px; padding: 0; justify-content: center; }
.tabs .home svg { width: 15px; height: 13px; }
.tabs .active { background: #fff linear-gradient(#0a9248, #0a9248) 50% 26px / 124px 2px no-repeat; }
.tabs .up { flex: 1; min-width: 24px; padding: 0; justify-content: center; border: 0; }

/* Windows taskbar */
.taskbar { flex: none; display: flex; height: 40px; background: linear-gradient(90deg, #3a2e27 25%, #332722 55%, #262619 68%, #33241d 77%, #453b30 85%, #2d281f); color: #fff; font-family: "Open Sans", sans-serif; }
.taskbar button { display: flex; align-items: center; justify-content: center; border: 0; padding: 0; background: none; }
.taskbar .start { width: 48px; background: #1b1f23; }
.find { display: flex; align-items: center; width: 288px; padding: 0 10px 0 12px; background: #f2f2f2; border: 1px solid #bbb; color: #222; }
.find input { flex: 1; min-width: 0; border: 0; background: none; padding: 0 0 0 11px; font-size: 14px; }
.find input::placeholder { color: #333; }
.apps { display: flex; }
.taskbar .apps button { width: 49px; }
.taskbar .apps .run { background: linear-gradient(#76b9ed, #76b9ed) 50% 38px / 40px 2px no-repeat; }
.taskbar .apps .cur-app { background: linear-gradient(#76b9ed, #76b9ed) 50% 38px / 44px 2px no-repeat, #5f554f; }
.tray { margin-left: auto; display: flex; align-items: center; gap: 9px; padding-right: 14px; font-size: 12px; }
.lang { margin-left: 4px; }
.clock { width: 62px; margin-right: 6px; text-align: center; line-height: 18px; font-size: 11px; white-space: nowrap; }

/* Activation notice drawn over the windows */
.watermark { position: fixed; right: 59px; bottom: 71px; color: rgba(130, 130, 130, .55); font: 14px/20px "Open Sans", sans-serif; pointer-events: none; }
.watermark b { display: block; font-size: 19px; line-height: 26px; font-weight: normal; }
```
